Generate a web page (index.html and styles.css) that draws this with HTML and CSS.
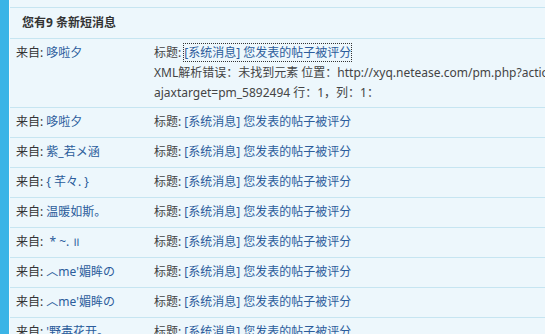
FILE: index.html
```html
<!DOCTYPE html>
<html lang="zh-CN">

<head>
    <meta charset="UTF-8" />
    <meta name="viewport" content="width=device-width, initial-scale=1.0" />
    <title>短消息</title>
    <link rel="stylesheet" href="styles.css">
</head>

<body>
    <div class="page">
        <div class="side-bar"></div>

        <div class="inbox">
            <div class="top-strip"></div>
            <div class="inbox-title">您有9 条新短消息</div>

            <!-- first message is expanded and shows the error text -->
            <div class="msg msg-open">
                <div class="msg-from">来自: <a href="#">哆啦夕</a></div>
                <div class="msg-body">
                    <div>标题: <a href="#" class="focused">[系统消息] 您发表的帖子被评分</a></div>
                    <div>XML解析错误：未找到元素 位置：http://xyq.netease.com/pm.php?action=view&amp;pmid=5892494&amp;inajax=1&amp;</div>
                    <div>ajaxtarget=pm_5892494 行：1，列：1：</div>
                </div>
            </div>

            <div class="msg">
                <div class="msg-from">来自: <a href="#">哆啦夕</a></div>
                <div class="msg-body">标题: <a href="#">[系统消息] 您发表的帖子被评分</a></div>
            </div>
            <div class="msg">
                <div class="msg-from">来自: <a href="#">紫_若メ涵</a></div>
                <div class="msg-body">标题: <a href="#">[系统消息] 您发表的帖子被评分</a></div>
            </div>
            <div class="msg">
                <div class="msg-from">来自: <a href="#">{ 芊々. }</a></div>
                <div class="msg-body">标题: <a href="#">[系统消息] 您发表的帖子被评分</a></div>
            </div>
            <div class="msg">
                <div class="msg-from">来自: <a href="#">温暖如斯。</a></div>
                <div class="msg-body">标题: <a href="#">[系统消息] 您发表的帖子被评分</a></div>
            </div>
            <div class="msg">
                <div class="msg-from">来自: <a href="#">&nbsp;* ~. ॥</a></div>
                <div class="msg-body">标题: <a href="#">[系统消息] 您发表的帖子被评分</a></div>
            </div>
            <div class="msg">
                <div class="msg-from">来自: <a href="#">︿me'媚眸の</a></div>
                <div class="msg-body">标题: <a href="#">[系统消息] 您发表的帖子被评分</a></div>
            </div>
            <div class="msg">
                <div class="msg-from">来自: <a href="#">︿me'媚眸の</a></div>
                <div class="msg-body">标题: <a href="#">[系统消息] 您发表的帖子被评分</a></div>
            </div>
            <div class="msg">
                <div class="msg-from">来自: <a href="#">'野毒花开。</a></div>
                <div class="msg-body">标题: <a href="#">[系统消息] 您发表的帖子被评分</a></div>
            </div>
        </div>
    </div>
</body>

</html>
```

FILE: styles.css
```css
body {
    margin: 0;
    background-color: #edf7fc;
    font-family: "Noto Sans", "Noto Sans CJK SC", sans-serif;
    font-size: 12px;
    color: #333;
    height: 100vh;
    overflow: hidden;
}

.page {
    display: flex;
    min-height: 100vh;
}

.side-bar {
    width: 9px;
    flex-shrink: 0;
    background-color: #3bb4e6;
    border-right: 1px solid #f7fcfe;
}

.inbox {
    flex: 1;
    white-space: nowrap;
}

.top-strip {
    height: 7px;
    border-bottom: 1px solid #c6e5f1;
}

.inbox-title {
    height: 30px;
    line-height: 30px;
    padding-left: 12px;
    font-weight: bold;
    color: #333;
    border-bottom: 1px solid #c6e5f1;
}

.msg {
    display: grid;
    grid-template-columns: 144px 1fr;
    padding: 4px 0 5px;
    line-height: 20px;
    border-bottom: 1px solid #c6e5f1;
}

.msg-open {
    padding-bottom: 4px;
}

.msg-from {
    padding-left: 6px;
}

.msg-body {
    color: #444;
}

.msg a {
    color: #2b5c9b;
    text-decoration: none;
}

.msg a.focused {
    outline: 1px dotted #333;
    outline-offset: 0;
}
```
